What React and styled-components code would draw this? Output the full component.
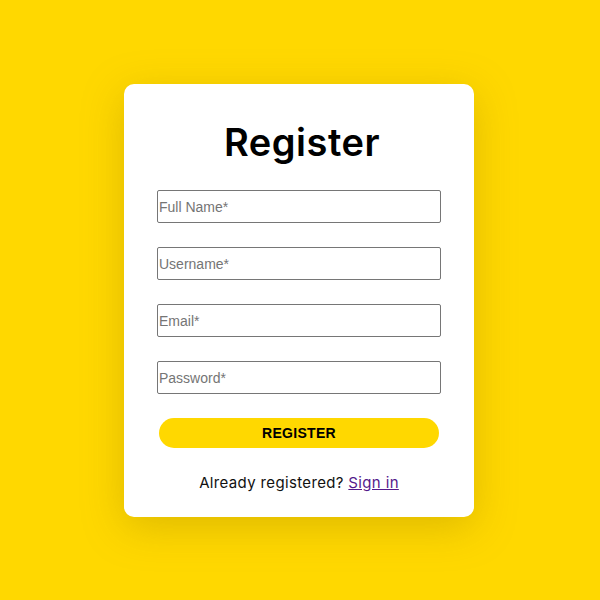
import React from 'react';
import styled, { createGlobalStyle } from 'styled-components';

const GlobalStyle = createGlobalStyle`
  html, body {
    margin: 0;
    padding: 0;
    background: #ffd800;
  }
  * { box-sizing: border-box; }
`;

const Page = styled.div`
  width: 600px;
  height: 600px;
  display: flex;
  justify-content: center;
  padding-top: 84px;
  padding-right: 2px;
`;

const Card = styled.form`
  width: 350px;
  height: 433px;
  background: #fff;
  border-radius: 10px;
  box-shadow: 0 10px 40px rgba(160, 130, 0, 0.35);
  padding: 34px 33px 0;
  display: flex;
  flex-direction: column;
  align-items: center;
`;

const Title = styled.h1`
  margin: 0 0 24px;
  padding-left: 6px;
  font-family: 'Inter', 'Noto Sans', sans-serif;
  font-weight: 600;
  font-size: 38px;
  line-height: 48px;
  color: #000;
  letter-spacing: 0.5px;
`;

const Fields = styled.div`
  width: 284px;
  display: flex;
  flex-direction: column;
  gap: 24px;
`;

const Input = styled.input`
  width: 284px;
  height: 33px;
  border: 1px solid #767676;
  border-radius: 2px;
  padding: 0 1px;
  font-family: 'Liberation Sans', Arial, sans-serif;
  font-size: 14px;
  color: #000;
  outline: none;
  &::placeholder { color: #757575; }
`;

const Button = styled.button`
  width: 280px;
  height: 30px;
  margin: 24px 0 0;
  border: none;
  border-radius: 15px;
  background: #ffd800;
  font-family: 'Liberation Sans', Arial, sans-serif;
  font-weight: 700;
  font-size: 14px;
  color: #000;
  letter-spacing: 0.3px;
`;

const Footer = styled.p`
  margin: 25px 0 0;
  font-family: 'Inter', 'Noto Sans', sans-serif;
  font-size: 15px;
  letter-spacing: 0.35px;
  color: #111;
`;

const Link = styled.a`
  color: #551a8b;
  text-decoration: underline;
`;

export default function App() {
  return (
    <>
      <GlobalStyle />
      <Page>
        <Card onSubmit={(e) => e.preventDefault()}>
          <Title>Register</Title>
          <Fields>
            <Input placeholder="Full Name*" />
            <Input placeholder="Username*" />
            <Input placeholder="Email*" />
            <Input type="password" placeholder="Password*" />
          </Fields>
          <Button type="submit">REGISTER</Button>
          <Footer>
            Already registered? <Link href="#">Sign in</Link>
          </Footer>
        </Card>
      </Page>
    </>
  );
}
